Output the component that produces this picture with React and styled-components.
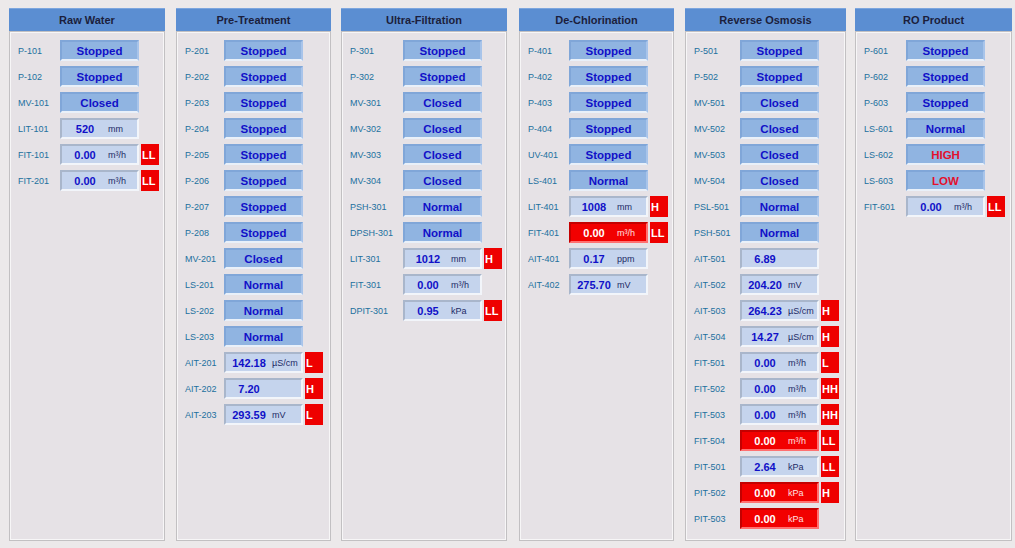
import React from 'react'
import styled, { createGlobalStyle } from 'styled-components'

const GlobalStyle = createGlobalStyle`
  html, body {
    margin: 0;
    padding: 0;
    background: #ece9ea;
    font-family: "Liberation Sans", Arial, sans-serif;
  }
`

const Page = styled.div`
  display: flex;
  align-items: flex-start;
  padding: 8px 0 0 9px;
  width: 1015px;
  height: 548px;
  box-sizing: border-box;
  overflow: hidden;
`

const Panel = styled.div`
  width: ${(p) => p.w}px;
  margin-right: ${(p) => p.gap}px;
  height: 533px;
  display: flex;
  flex-direction: column;
  flex-shrink: 0;
`

const Header = styled.div`
  height: 23px;
  background: #5b8ed2;
  border-top: 1px solid #7da6de;
  box-sizing: border-box;
  display: flex;
  align-items: center;
  justify-content: center;
  font-size: 11px;
  font-weight: bold;
  color: #1b1e3c;
`

const Body = styled.div`
  flex: 1;
  background: #e6e2e6;
  border: 1px solid #c2c0c2;
  box-shadow: inset 1px 1px 0 #f7f6f7, inset -1px -1px 0 #f7f6f7;
  padding: 8px 0 0 8px;
  display: flex;
  flex-direction: column;
  gap: 5px;
`

const Row = styled.div`
  display: grid;
  grid-template-columns: ${(p) => p.lw}px 79px 18px;
  column-gap: 2px;
  height: 21px;
  align-items: center;
`

const Label = styled.div`
  font-size: 9px;
  color: #22709e;
  white-space: nowrap;
`

const StatusBox = styled.div`
  height: 21px;
  box-sizing: border-box;
  background: #90b4e1;
  border: 2px solid;
  border-color: #80a6d8 #a8c4ea #e9f0f9 #80a6d8;
  display: flex;
  align-items: center;
  justify-content: center;
  font-size: 11.5px;
  font-weight: bold;
  color: ${(p) => (p.alert ? '#e4102c' : '#1010c8')};
`

const ValueBox = styled.div`
  height: 21px;
  box-sizing: border-box;
  background: ${(p) => (p.red ? '#f20000' : '#c5d4ed')};
  border: 2px solid;
  border-color: ${(p) =>
    p.red ? '#c40000 #ff7070 #ff7070 #c40000' : '#a9b6cb #f2f5fa #f2f5fa #a9b6cb'};
  display: grid;
  grid-template-columns: 46px 1fr;
  align-items: center;
  color: ${(p) => (p.red ? '#ffffff' : '#1010c8')};
`

const Num = styled.span`
  font-size: 11px;
  font-weight: bold;
  text-align: center;
`

const Unit = styled.span`
  font-size: 9px;
  color: ${(p) => (p.red ? '#ffe0e0' : '#1d2a66')};
  white-space: nowrap;
`

const Badge = styled.div`
  height: 21px;
  width: 18px;
  box-sizing: border-box;
  padding-left: 1px;
  background: #ee0000;
  color: #fff;
  font-size: 11px;
  font-weight: bold;
  display: flex;
  align-items: center;
  justify-content: flex-start;
  overflow: hidden;
`

const S = (tag, text, alert) => ({ tag, text, alert })
const V = (tag, value, unit, alarm, red) => ({ tag, value, unit, alarm, red })

const panels = [
  {
    title: 'Raw Water', w: 156, gap: 11, lw: 40,
    rows: [
      S('P-101', 'Stopped'), S('P-102', 'Stopped'), S('MV-101', 'Closed'),
      V('LIT-101', '520', 'mm'), V('FIT-101', '0.00', 'm³/h', 'LL'), V('FIT-201', '0.00', 'm³/h', 'LL'),
    ],
  },
  {
    title: 'Pre-Treatment', w: 155, gap: 10, lw: 37,
    rows: [
      S('P-201', 'Stopped'), S('P-202', 'Stopped'), S('P-203', 'Stopped'), S('P-204', 'Stopped'),
      S('P-205', 'Stopped'), S('P-206', 'Stopped'), S('P-207', 'Stopped'), S('P-208', 'Stopped'),
      S('MV-201', 'Closed'), S('LS-201', 'Normal'), S('LS-202', 'Normal'), S('LS-203', 'Normal'),
      V('AIT-201', '142.18', 'µS/cm', 'L'), V('AIT-202', '7.20', '', 'H'), V('AIT-203', '293.59', 'mV', 'L'),
    ],
  },
  {
    title: 'Ultra-Filtration', w: 166, gap: 12, lw: 51,
    rows: [
      S('P-301', 'Stopped'), S('P-302', 'Stopped'), S('MV-301', 'Closed'), S('MV-302', 'Closed'),
      S('MV-303', 'Closed'), S('MV-304', 'Closed'), S('PSH-301', 'Normal'), S('DPSH-301', 'Normal'),
      V('LIT-301', '1012', 'mm', 'H'), V('FIT-301', '0.00', 'm³/h'), V('DPIT-301', '0.95', 'kPa', 'LL'),
    ],
  },
  {
    title: 'De-Chlorination', w: 155, gap: 11, lw: 39,
    rows: [
      S('P-401', 'Stopped'), S('P-402', 'Stopped'), S('P-403', 'Stopped'), S('P-404', 'Stopped'),
      S('UV-401', 'Stopped'), S('LS-401', 'Normal'),
      V('LIT-401', '1008', 'mm', 'H'), V('FIT-401', '0.00', 'm³/h', 'LL', true),
      V('AIT-401', '0.17', 'ppm'), V('AIT-402', '275.70', 'mV'),
    ],
  },
  {
    title: 'Reverse Osmosis', w: 161, gap: 9, lw: 44,
    rows: [
      S('P-501', 'Stopped'), S('P-502', 'Stopped'), S('MV-501', 'Closed'), S('MV-502', 'Closed'),
      S('MV-503', 'Closed'), S('MV-504', 'Closed'), S('PSL-501', 'Normal'), S('PSH-501', 'Normal'),
      V('AIT-501', '6.89', ''), V('AIT-502', '204.20', 'mV'),
      V('AIT-503', '264.23', 'µS/cm', 'H'), V('AIT-504', '14.27', 'µS/cm', 'H'),
      V('FIT-501', '0.00', 'm³/h', 'L'), V('FIT-502', '0.00', 'm³/h', 'HH'), V('FIT-503', '0.00', 'm³/h', 'HH'),
      V('FIT-504', '0.00', 'm³/h', 'LL', true), V('PIT-501', '2.64', 'kPa', 'LL'),
      V('PIT-502', '0.00', 'kPa', 'H', true), V('PIT-503', '0.00', 'kPa', null, true),
    ],
  },
  {
    title: 'RO Product', w: 157, gap: 0, lw: 40,
    rows: [
      S('P-601', 'Stopped'), S('P-602', 'Stopped'), S('P-603', 'Stopped'), S('LS-601', 'Normal'),
      S('LS-602', 'HIGH', true), S('LS-603', 'LOW', true), V('FIT-601', '0.00', 'm³/h', 'LL'),
    ],
  },
]

const Item = ({ row, lw }) => (
  <Row lw={lw}>
    <Label>{row.tag}</Label>
    {row.text ? (
      <StatusBox alert={row.alert}>{row.text}</StatusBox>
    ) : (
      <ValueBox red={row.red}>
        <Num>{row.value}</Num>
        <Unit red={row.red}>{row.unit}</Unit>
      </ValueBox>
    )}
    {row.alarm ? <Badge>{row.alarm}</Badge> : <span />}
  </Row>
)

export default function App() {
  return (
    <>
      <GlobalStyle />
      <Page>
        {panels.map((p) => (
          <Panel key={p.title} w={p.w} gap={p.gap}>
            <Header>{p.title}</Header>
            <Body>
              {p.rows.map((r) => (
                <Item key={r.tag} row={r} lw={p.lw} />
              ))}
            </Body>
          </Panel>
        ))}
      </Page>
    </>
  )
}
